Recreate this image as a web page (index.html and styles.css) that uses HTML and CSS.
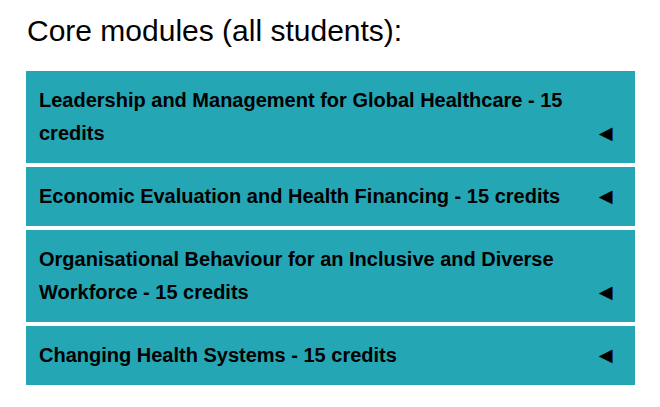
FILE: index.html
```html
<!DOCTYPE html>
<html lang="en">
<head>
    <meta charset="UTF-8">
    <meta name="viewport" content="width=device-width, initial-scale=1.0">
    <title>Core modules</title>
    <link rel="stylesheet" href="styles.css">
</head>
<body>
    <h2>Core modules (all students):</h2>

    <!-- module list -->
    <div class="modules">
        <div class="module">
            <span class="title">Leadership and Management for Global Healthcare - 15 credits</span>
            <span class="arrow">&#9668;</span>
        </div>
        <div class="module">
            <span class="title">Economic Evaluation and Health Financing - 15 credits</span>
            <span class="arrow">&#9668;</span>
        </div>
        <div class="module">
            <span class="title">Organisational Behaviour for an Inclusive and Diverse Workforce - 15 credits</span>
            <span class="arrow">&#9668;</span>
        </div>
        <div class="module">
            <span class="title">Changing Health Systems - 15 credits</span>
            <span class="arrow">&#9668;</span>
        </div>
    </div>
</body>
</html>
```

FILE: styles.css
```css
body {
    font-family: "Liberation Sans", Arial, sans-serif;
    margin: 0;
    padding: 0 25px 0 26px;
    background-color: #fff;
    color: #000;
}
h2 {
    font-size: 30px;
    font-weight: normal;
    margin: 0;
    padding: 13px 0 0 1px;
    line-height: 36px;
    height: 58px;
}
.modules {
    display: flex;
    flex-direction: column;
    gap: 4px;
}
.module {
    display: flex;
    align-items: flex-end;
    justify-content: space-between;
    background-color: #25a6b4;
    padding: 13px 18px 13px 13px;
    font-size: 20px;
    font-weight: bold;
    line-height: 33px;
}
.title {
    flex: 1;
}
.arrow {
    font-size: 23px;
    margin-left: 10px;
}
```
